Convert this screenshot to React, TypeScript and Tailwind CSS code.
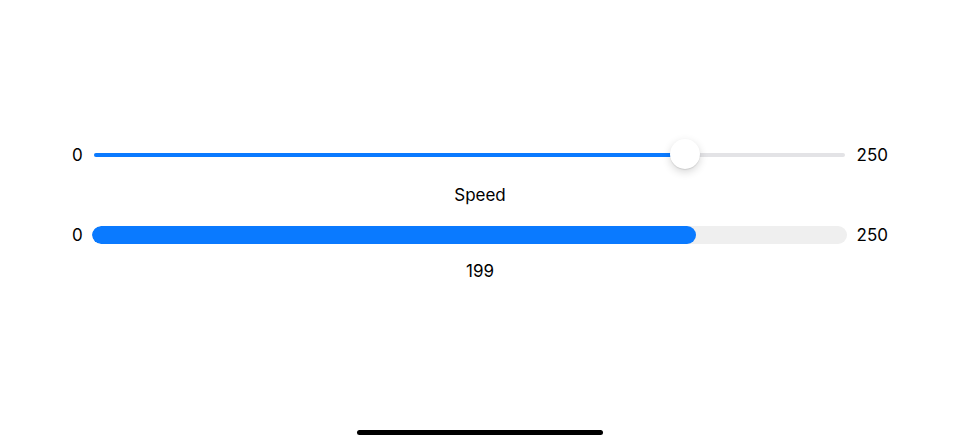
import React from 'react';

const MIN = 0;
const MAX = 250;
const VALUE = 199;

const App: React.FC = () => {
  const ratio = (VALUE - MIN) / (MAX - MIN);

  return (
    <div
      className="h-[444px] w-[960px] bg-white flex flex-col text-black"
      style={{ fontFamily: 'Inter, "Noto Sans", sans-serif' }}
    >
      <div className="flex flex-col px-[72px] pt-[139px]">
        {/* Slider */}
        <div className="flex items-center h-8 gap-3 text-[17px]">
          <span className="w-[10px] text-right leading-5">{MIN}</span>
          <div className="relative flex-1 h-8 flex items-center">
            <div className="w-full h-1 rounded-full bg-[#e3e3e6] overflow-hidden">
              <div
                className="h-full bg-[#0a7aff]"
                style={{ width: `calc(17px + ${ratio} * (100% - 30px))` }}
              />
            </div>
            <div
              className="absolute top-0 w-[30px] h-[30px] -ml-[15px] rounded-full bg-white shadow-[0_3px_8px_rgba(0,0,0,0.16),0_1px_1px_rgba(0,0,0,0.1)]"
              style={{ left: `calc(17px + ${ratio} * (100% - 30px))` }}
            />
          </div>
          <span className="leading-5">{MAX}</span>
        </div>

        <div className="mt-[14px] text-center text-[17px] leading-5">Speed</div>

        {/* Progress */}
        <div className="mt-5 flex items-center gap-[10px] text-[17px]">
          <span className="w-[10px] text-right leading-5">{MIN}</span>
          <div className="flex-1 h-[18px] rounded-full bg-[#efefef] overflow-hidden">
            <div className="h-full rounded-full bg-[#0a7aff]" style={{ width: `calc(${ratio * 100}% + 3px)` }} />
          </div>
          <span className="leading-5">{MAX}</span>
        </div>

        <div className="mt-4 text-center text-[17px] leading-5">{VALUE}</div>
      </div>

      <div className="mt-auto pb-[9px] flex justify-center">
        <div className="w-[246px] h-[5px] rounded-full bg-black" />
      </div>
    </div>
  );
};

export default App;
